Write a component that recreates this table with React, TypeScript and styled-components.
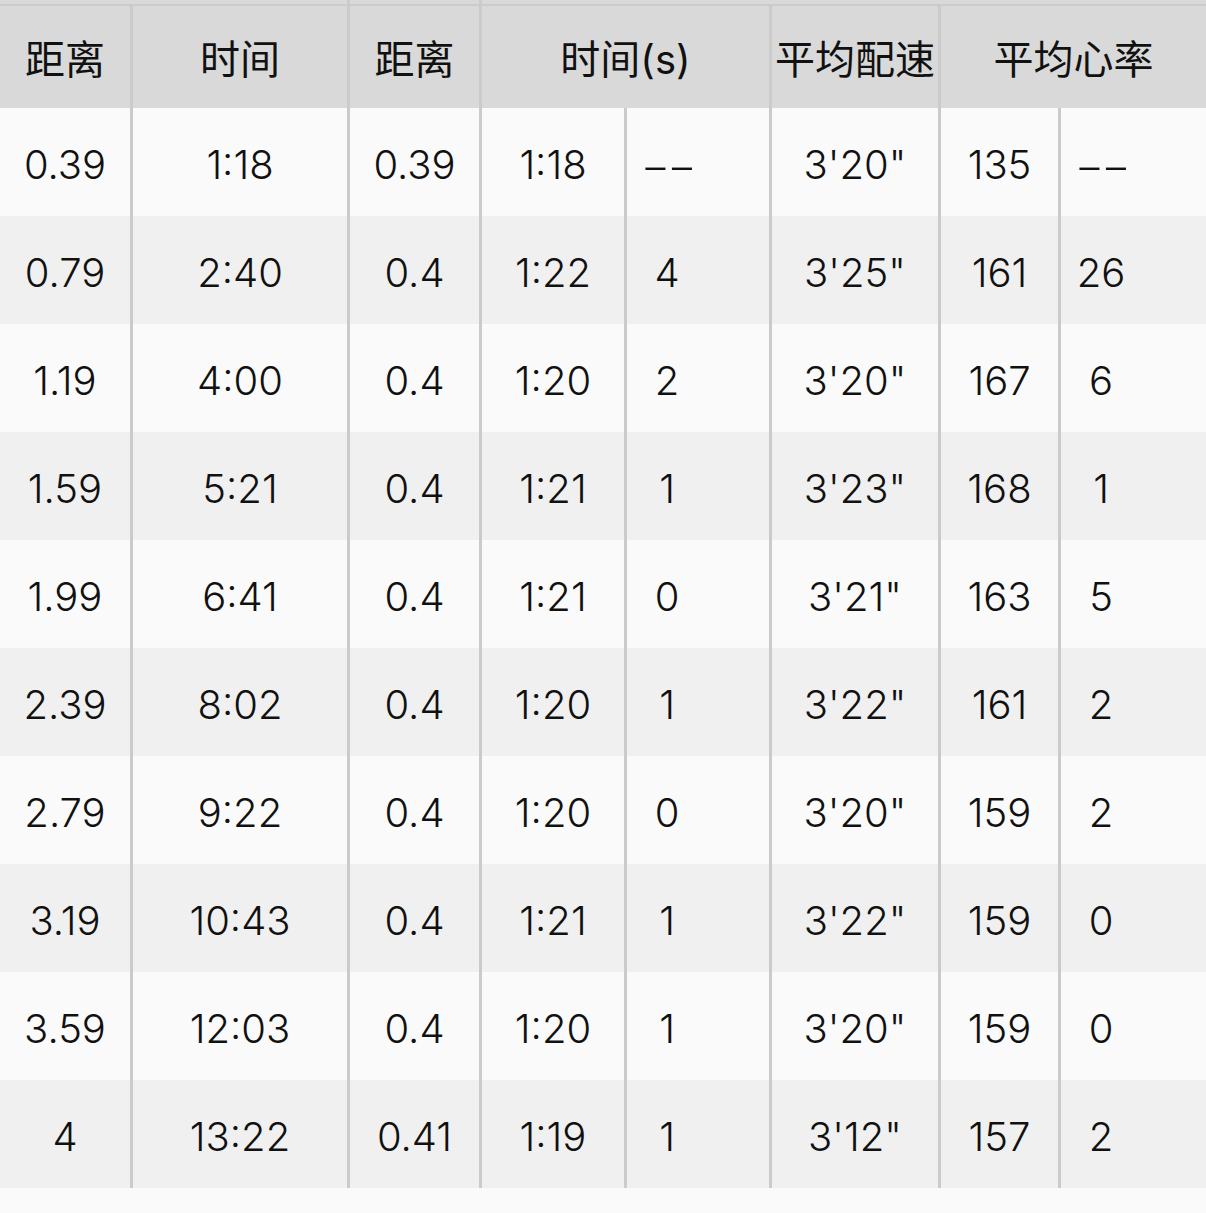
import styled, { createGlobalStyle } from 'styled-components';

const GlobalStyle = createGlobalStyle`
  html, body {
    margin: 0;
    padding: 0;
    background: #fafafa;
  }
  body {
    font-family: Inter, "Noto Sans CJK SC", sans-serif;
    color: #111;
  }
`;

type Split = {
  total: string;
  time: string;
  dist: string;
  segTime: string;
  segDiff: string;
  pace: string;
  hr: string;
  hrDiff: string;
};

const splits: Split[] = [
  { total: '0.39', time: '1:18', dist: '0.39', segTime: '1:18', segDiff: '--', pace: `3'20"`, hr: '135', hrDiff: '--' },
  { total: '0.79', time: '2:40', dist: '0.4', segTime: '1:22', segDiff: '4', pace: `3'25"`, hr: '161', hrDiff: '26' },
  { total: '1.19', time: '4:00', dist: '0.4', segTime: '1:20', segDiff: '2', pace: `3'20"`, hr: '167', hrDiff: '6' },
  { total: '1.59', time: '5:21', dist: '0.4', segTime: '1:21', segDiff: '1', pace: `3'23"`, hr: '168', hrDiff: '1' },
  { total: '1.99', time: '6:41', dist: '0.4', segTime: '1:21', segDiff: '0', pace: `3'21"`, hr: '163', hrDiff: '5' },
  { total: '2.39', time: '8:02', dist: '0.4', segTime: '1:20', segDiff: '1', pace: `3'22"`, hr: '161', hrDiff: '2' },
  { total: '2.79', time: '9:22', dist: '0.4', segTime: '1:20', segDiff: '0', pace: `3'20"`, hr: '159', hrDiff: '2' },
  { total: '3.19', time: '10:43', dist: '0.4', segTime: '1:21', segDiff: '1', pace: `3'22"`, hr: '159', hrDiff: '0' },
  { total: '3.59', time: '12:03', dist: '0.4', segTime: '1:20', segDiff: '1', pace: `3'20"`, hr: '159', hrDiff: '0' },
  { total: '4', time: '13:22', dist: '0.41', segTime: '1:19', segDiff: '1', pace: `3'12"`, hr: '157', hrDiff: '2' },
];

const LINE = '#cbcbcb';

const Table = styled.div`
  display: grid;
  grid-template-columns: 133px 217px 132px 145px 145px 169px 120px 145px;
  width: 1206px;
`;

// sliver of the header row above, cut off by the screenshot
const StripCell = styled.div<{ $span: number; $edge?: boolean }>`
  grid-column: span ${(p) => p.$span};
  height: 4px;
  background: #d9d9d9;
  border-bottom: 2px solid ${LINE};
  border-right: ${(p) => (p.$edge ? 'none' : `3px solid ${LINE}`)};
`;

const HeadCell = styled.div<{ $span?: number; $edge?: boolean }>`
  grid-column: span ${(p) => p.$span ?? 1};
  height: 102px;
  display: flex;
  align-items: center;
  justify-content: center;
  background: #d9d9d9;
  border-right: ${(p) => (p.$edge ? 'none' : `3px solid ${LINE}`)};
  font-size: 40px;
  font-weight: 400;
  white-space: nowrap;
`;

const Cell = styled.div<{ $even: boolean; $edge?: boolean; $left?: boolean }>`
  height: 108px;
  box-sizing: border-box;
  padding-top: 4px;
  display: flex;
  align-items: center;
  justify-content: ${(p) => (p.$left ? 'flex-start' : 'center')};
  background: ${(p) => (p.$even ? '#f0f0f0' : '#fafafa')};
  border-right: ${(p) => (p.$edge ? 'none' : `3px solid ${LINE}`)};
  font-size: 40px;
  font-weight: 300;
  white-space: nowrap;
`;

const DiffText = styled.span`
  width: 80px;
  text-align: center;
`;

const Dash = styled.span`
  display: inline-block;
  letter-spacing: -2px;
  transform: scaleX(1.65) translateY(2px);
`;

const App = () => {
  return (
    <>
      <GlobalStyle />
      <Table>
        <StripCell $span={2} />
        <StripCell $span={1} />
        <StripCell $span={5} $edge />

        <HeadCell>距离</HeadCell>
        <HeadCell>时间</HeadCell>
        <HeadCell>距离</HeadCell>
        <HeadCell $span={2}>时间(s)</HeadCell>
        <HeadCell>平均配速</HeadCell>
        <HeadCell $span={2} $edge>平均心率</HeadCell>

        {splits.map((s, i) => {
          const even = i % 2 === 1;
          const diff = (v: string) => (v === '--' ? <Dash>{v}</Dash> : v);
          return [
            <Cell key={`a${i}`} $even={even}>{s.total}</Cell>,
            <Cell key={`b${i}`} $even={even}>{s.time}</Cell>,
            <Cell key={`c${i}`} $even={even}>{s.dist}</Cell>,
            <Cell key={`d${i}`} $even={even}>{s.segTime}</Cell>,
            <Cell key={`e${i}`} $even={even} $left>
              <DiffText>{diff(s.segDiff)}</DiffText>
            </Cell>,
            <Cell key={`f${i}`} $even={even}>{s.pace}</Cell>,
            <Cell key={`g${i}`} $even={even}>{s.hr}</Cell>,
            <Cell key={`h${i}`} $even={even} $edge $left>
              <DiffText>{diff(s.hrDiff)}</DiffText>
            </Cell>,
          ];
        })}
      </Table>
    </>
  );
};

export default App;
